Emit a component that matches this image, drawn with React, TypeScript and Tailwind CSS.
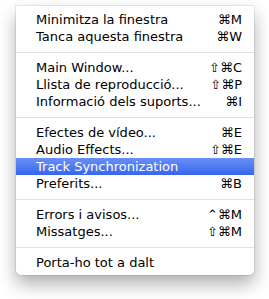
type Item = { label: string; keys?: string; active?: boolean } | 'sep';

const items: Item[] = [
  { label: 'Minimitza la finestra', keys: '⌘M' },
  { label: 'Tanca aquesta finestra', keys: '⌘W' },
  'sep',
  { label: 'Main Window...', keys: '⇧⌘C' },
  { label: 'Llista de reproducció...', keys: '⇧⌘P' },
  { label: 'Informació dels suports...', keys: '⌘I' },
  'sep',
  { label: 'Efectes de vídeo...', keys: '⌘E' },
  { label: 'Audio Effects...', keys: '⇧⌘E' },
  { label: 'Track Synchronization', active: true },
  { label: 'Preferits...', keys: '⌘B' },
  'sep',
  { label: 'Errors i avisos...', keys: '⌃⌘M' },
  { label: 'Missatges...', keys: '⇧⌘M' },
  'sep',
  { label: 'Porta-ho tot a dalt' },
];

export default function App() {
  return (
    <div className="w-[269px] h-[299px] bg-white pt-[6px] pl-[16px] overflow-hidden">
      {/* Menu panel */}
      <div
        className="w-[238px] bg-white rounded-b-[5px] pt-[5px] pb-[4px] shadow-[0_0_0_1px_rgba(0,0,0,0.08),0_9px_18px_rgba(0,0,0,0.32)] text-[13px] text-[#000]"
        style={{ fontFamily: '"DejaVu Sans", sans-serif' }}
      >
        {items.map((item, i) =>
          item === 'sep' ? (
            <div key={i} className="h-[14px] flex items-center">
              <div className="h-px w-full bg-[#e0e0e0]" />
            </div>
          ) : (
            <div
              key={i}
              className={`h-[17px] flex items-center justify-between pl-[20px] pr-[12px] ${
                item.active ? 'bg-gradient-to-b from-[#6a8ff4] to-[#3766ee] text-white' : ''
              }`}
            >
              <span>{item.label}</span>
              {item.keys && <span>{item.keys}</span>}
            </div>
          )
        )}
      </div>
    </div>
  );
}
